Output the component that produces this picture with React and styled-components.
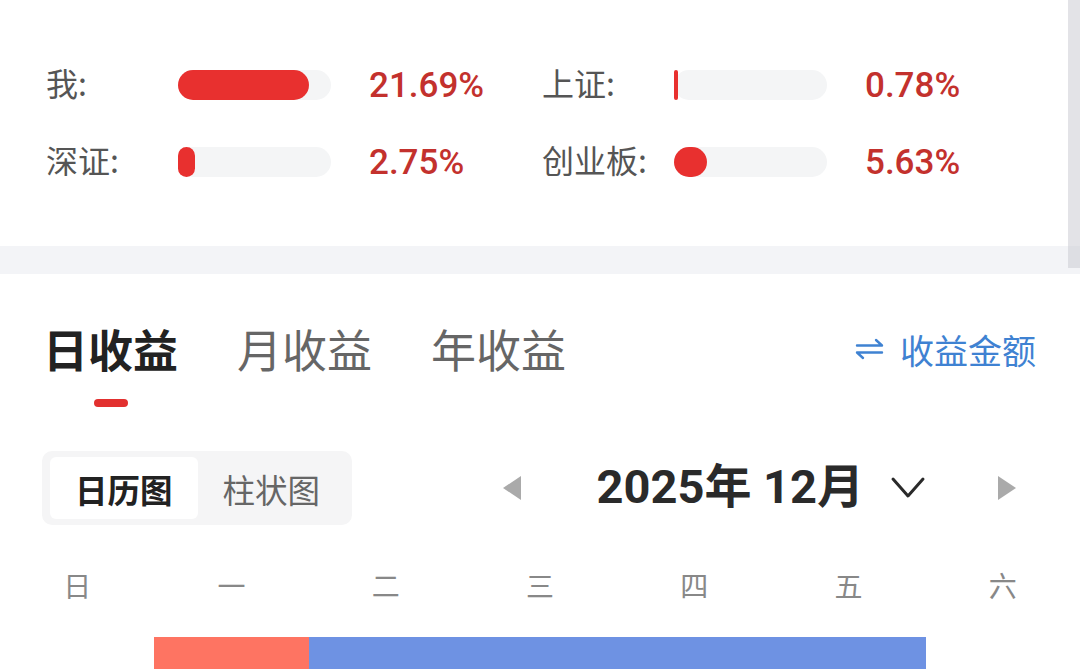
import React from "react";
import styled, { createGlobalStyle } from "styled-components";

const Global = createGlobalStyle`
  html, body { margin: 0; padding: 0; background: #fff; }
  body { font-family: "Noto Sans CJK SC", "Noto Sans", sans-serif; overflow: hidden; }
  * { box-sizing: border-box; }
`;

const Page = styled.div`
  position: relative;
  width: 1080px;
  height: 669px;
  overflow: hidden;
  background: #fff;
`;

const ScrollThumb = styled.div`
  position: absolute;
  top: 0;
  right: 0;
  width: 12px;
  height: 268px;
  background: rgba(200, 200, 208, 0.5);
`;

const StatsCard = styled.section`
  height: 246px;
  padding: 60px 0 0 46px;
  display: grid;
  grid-template-columns: 496px 1fr;
  grid-auto-rows: 50px;
  row-gap: 27px;
`;

const Stat = styled.div`
  display: flex;
  align-items: center;
`;

const Label = styled.span`
  width: 132px;
  padding-bottom: 7px;
  font-size: 32px;
  color: #555;
  line-height: 1;
  white-space: nowrap;
`;

const Track = styled.div`
  width: 153px;
  height: 30px;
  border-radius: 15px;
  background: #f4f5f6;
`;

const Fill = styled.div`
  height: 100%;
  border-radius: 15px;
  background: #e8302f;
`;

const Value = styled.span`
  margin-left: 38px;
  font-family: Roboto, "Noto Sans", sans-serif;
  font-size: 35px;
  font-weight: 500;
  color: #c3312d;
  line-height: 1;
`;

const Separator = styled.div`
  height: 28px;
  background: #f3f4f7;
`;

const TabBar = styled.div`
  display: flex;
  align-items: flex-start;
  padding: 49px 44px 0 43px;
`;

const Tabs = styled.div`
  display: flex;
  gap: 59px;
`;

const Tab = styled.div`
  display: flex;
  flex-direction: column;
  align-items: center;
`;

const TabText = styled.span`
  font-size: 45px;
  line-height: 52px;
  font-weight: ${(p) => (p.$active ? 700 : 400)};
  color: ${(p) => (p.$active ? "#222" : "#666")};
  white-space: nowrap;
`;

const TabLine = styled.span`
  margin-top: 24px;
  width: 34px;
  height: 8px;
  border-radius: 4px;
  background: ${(p) => (p.$active ? "#e2302f" : "transparent")};
`;

const Switch = styled.div`
  margin-left: auto;
  display: flex;
  align-items: center;
  gap: 16px;
  height: 52px;
  color: #3f82d2;
  font-size: 34px;
`;

const Toolbar = styled.div`
  display: flex;
  align-items: center;
  padding: 44px 64px 0 42px;
`;

const Segmented = styled.div`
  display: flex;
  padding: 6px 7px 6px 8px;
  background: #f5f5f6;
  border-radius: 10px;
`;

const Segment = styled.div`
  height: 62px;
  padding: 0 25px;
  display: flex;
  align-items: center;
  border-radius: 6px;
  font-size: 32.5px;
  background: ${(p) => (p.$active ? "#fff" : "transparent")};
  color: ${(p) => (p.$active ? "#222" : "#666")};
  font-weight: ${(p) => (p.$active ? 700 : 400)};
  white-space: nowrap;
`;

const MonthNav = styled.div`
  margin-left: auto;
  display: flex;
  align-items: center;
`;

const Tri = styled.svg`
  width: 18px;
  height: 24px;
  display: block;
`;

const MonthTitle = styled.span`
  margin-left: 76px;
  padding-bottom: 3px;
  font-family: Roboto, "Noto Sans CJK SC", sans-serif;
  font-weight: 700;
  font-size: 47px;
  color: #2a2a2a;
  white-space: nowrap;
  line-height: 1;
`;

const Chevron = styled.svg`
  margin-left: 26px;
  margin-right: 72px;
  width: 36px;
  height: 26px;
  display: block;
`;

const WeekRow = styled.div`
  margin-top: 40px;
  display: grid;
  grid-template-columns: repeat(7, 1fr);
`;

const WeekDay = styled.span`
  text-align: center;
  font-size: 28px;
  line-height: 40px;
  color: #888;
`;

const CellRow = styled.div`
  margin-top: 32px;
  display: grid;
  grid-template-columns: repeat(7, 1fr);
  height: 80px;
`;

const Cell = styled.div`
  background: ${(p) => p.$bg || "transparent"};
`;

const stats = [
  { label: "我:", fill: 131, value: "21.69%" },
  { label: "上证:", fill: 4, value: "0.78%" },
  { label: "深证:", fill: 17, value: "2.75%" },
  { label: "创业板:", fill: 33, value: "5.63%" },
];

const weekdays = ["日", "一", "二", "三", "四", "五", "六"];
const cells = [null, "#fe7462", "#6e92e3", "#6e92e3", "#6e92e3", "#6e92e3", null];

export default function App() {
  return (
    <Page>
      <Global />
      <StatsCard>
        {stats.map((s) => (
          <Stat key={s.label}>
            <Label>{s.label}</Label>
            <Track>
              <Fill style={{ width: s.fill }} />
            </Track>
            <Value>{s.value}</Value>
          </Stat>
        ))}
      </StatsCard>
      <Separator />
      <TabBar>
        <Tabs>
          <Tab>
            <TabText $active>日收益</TabText>
            <TabLine $active />
          </Tab>
          <Tab>
            <TabText>月收益</TabText>
            <TabLine />
          </Tab>
          <Tab>
            <TabText>年收益</TabText>
            <TabLine />
          </Tab>
        </Tabs>
        <Switch>
          <svg width="29" height="22" viewBox="0 0 29 22" fill="none" stroke="#3f82d2" strokeWidth="2.4" strokeLinecap="round" strokeLinejoin="round">
            <path d="M2 7.5 H27 L21 2" />
            <path d="M27 14.5 H2 L8 20" />
          </svg>
          <span>收益金额</span>
        </Switch>
      </TabBar>
      <Toolbar>
        <Segmented>
          <Segment $active>日历图</Segment>
          <Segment>柱状图</Segment>
        </Segmented>
        <MonthNav>
          <Tri viewBox="0 0 18 24">
            <path d="M18 0 V24 L0 12 Z" fill="#aaa" />
          </Tri>
          <MonthTitle>2025年 12月</MonthTitle>
          <Chevron viewBox="0 0 36 26" fill="none" stroke="#2a2a2a" strokeWidth="3" strokeLinecap="round" strokeLinejoin="round">
            <path d="M3 4 L18 21 L33 4" />
          </Chevron>
          <Tri viewBox="0 0 18 24">
            <path d="M0 0 V24 L18 12 Z" fill="#aaa" />
          </Tri>
        </MonthNav>
      </Toolbar>
      <WeekRow>
        {weekdays.map((d) => (
          <WeekDay key={d}>{d}</WeekDay>
        ))}
      </WeekRow>
      <CellRow>
        {cells.map((c, i) => (
          <Cell key={i} $bg={c} />
        ))}
      </CellRow>
      <ScrollThumb />
    </Page>
  );
}
